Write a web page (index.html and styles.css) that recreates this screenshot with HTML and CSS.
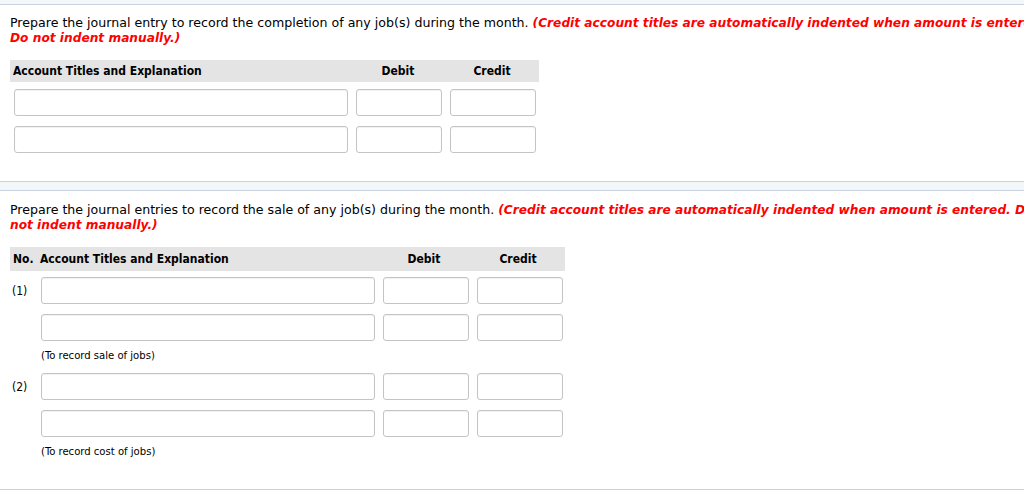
FILE: index.html
```html
<!DOCTYPE html>
<html>
<head>
<meta charset="utf-8">
<link rel="stylesheet" href="styles.css">
</head>
<body>
<div class="page">
  <div class="band band-top"></div>
  <section class="question q1">
    <p class="prompt">Prepare the journal entry to record the completion of any job(s) during the month. <em class="note">(Credit account titles are automatically indented when amount is entered. Do not indent manually.)</em></p>
    <div class="journal j-simple">
      <div class="jhead">
        <div class="c-acct">Account Titles and Explanation</div>
        <div class="c-num">Debit</div>
        <div class="c-num">Credit</div>
      </div>
      <div class="jrow">
        <input class="in-acct" type="text"><input class="in-num" type="text"><input class="in-num" type="text">
      </div>
      <div class="jrow">
        <input class="in-acct" type="text"><input class="in-num" type="text"><input class="in-num" type="text">
      </div>
    </div>
  </section>
  <div class="band band-sep"></div>
  <section class="question q2">
    <p class="prompt">Prepare the journal entries to record the sale of any job(s) during the month. <em class="note">(Credit account titles are automatically indented when amount is entered. Do not indent manually.)</em></p>
    <div class="journal j-numbered">
      <div class="jhead">
        <div class="c-no">No.</div>
        <div class="c-acct">Account Titles and Explanation</div>
        <div class="c-num">Debit</div>
        <div class="c-num">Credit</div>
      </div>
      <div class="jrow">
        <div class="c-no lbl">(1)</div>
        <input class="in-acct" type="text"><input class="in-num" type="text"><input class="in-num" type="text">
      </div>
      <div class="jrow">
        <div class="c-no lbl"></div>
        <input class="in-acct" type="text"><input class="in-num" type="text"><input class="in-num" type="text">
      </div>
      <div class="jmemo">(To record sale of jobs)</div>
      <div class="jrow">
        <div class="c-no lbl">(2)</div>
        <input class="in-acct" type="text"><input class="in-num" type="text"><input class="in-num" type="text">
      </div>
      <div class="jrow">
        <div class="c-no lbl"></div>
        <input class="in-acct" type="text"><input class="in-num" type="text"><input class="in-num" type="text">
      </div>
      <div class="jmemo">(To record cost of jobs)</div>
    </div>
  </section>
  <div class="band band-bottom"></div>
</div>
</body>
</html>
```

FILE: styles.css
```css
html, body {
  margin: 0;
  padding: 0;
  background: #ffffff;
  overflow: hidden;
}

.page {
  width: 1055px;
  font-family: "DejaVu Sans", Verdana, sans-serif;
  color: #000;
}

.band {
  background: #f4f7fa;
  border-bottom: 1px solid #c9d3df;
}
.band-top {
  height: 4px;
}
.band-sep {
  height: 8px;
  border-top: 1px solid #c9d3df;
  margin-top: 28px;
}
.band-bottom {
  height: 0;
  background: none;
  margin-top: 30px;
  border-bottom: 1px solid #c9d3df;
}

.question {
  padding: 0 0 0 10px;
}

.prompt {
  margin: 10px 0 0 0;
  font-size: 12.6px;
  line-height: 15px;
}
.q2 .prompt {
  margin-top: 11px;
}

.note {
  color: #ff0000;
  font-weight: bold;
  font-style: italic;
  font-size: 12.2px;
  line-height: 12px;
}

.journal {
  margin-top: 15px;
  font-family: "DejaVu Sans Condensed", Tahoma, sans-serif;
  font-size: 12px;
}
.j-simple { width: 529px; }
.j-numbered { width: 555px; margin-top: 15px; }

.jhead {
  display: flex;
  align-items: center;
  height: 22px;
  background: #e4e4e4;
  font-weight: bold;
  padding: 0 4px 0 3px;
}
.j-numbered .jhead { height: 24px; }

.jhead .c-acct {
  flex: 1;
}
.jhead .c-num {
  width: 86px;
  text-align: center;
}
.j-simple .jhead .c-num:nth-child(2) { margin-right: 8px; }
.j-numbered .jhead .c-num:nth-child(3) { margin-right: 8px; }
.j-numbered .jhead .c-no { width: 27px; }

.jrow {
  display: flex;
  align-items: center;
  gap: 8px;
  margin-top: 7px;
  padding-left: 4px;
}
.jrow + .jrow { margin-top: 10px; }

.j-numbered .jrow { padding-left: 2px; gap: 0; margin-top: 6px; }
.j-numbered .jrow + .jrow { margin-top: 10px; }
.j-numbered .jrow .c-no { width: 29px; font-size: 12px; }
.j-numbered .in-num { margin-left: 8px; }

input {
  box-sizing: border-box;
  height: 27px;
  border: 1px solid #c4c4c4;
  border-radius: 3px;
  background: #fff;
  box-shadow: inset 0 1px 1px rgba(0,0,0,0.06);
  margin: 0;
  padding: 0 4px;
  font: inherit;
}
.in-acct { width: 334px; }
.in-num { width: 86px; }

.jmemo {
  padding-left: 31px;
  font-size: 11.2px;
  margin-top: 7px;
  line-height: 15px;
}
.j-numbered .jmemo + .jrow { margin-top: 10px; }
```
